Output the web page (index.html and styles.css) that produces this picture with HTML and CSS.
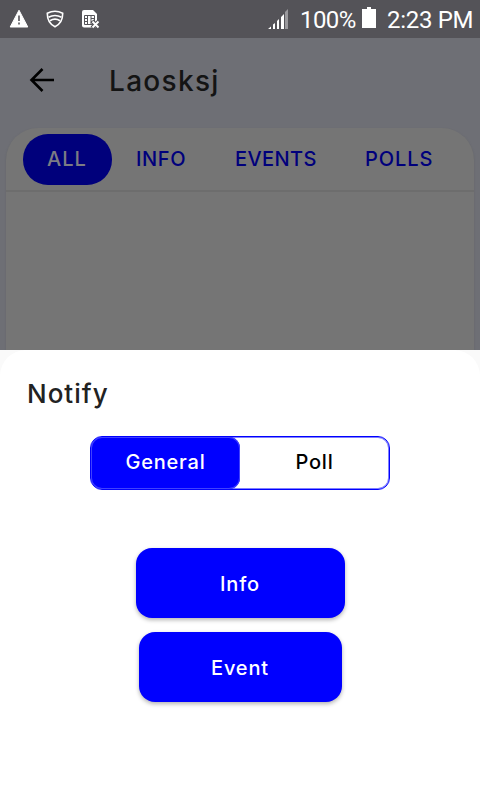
FILE: index.html
```html
<!DOCTYPE html>
<html lang="en">
<head>
<meta charset="utf-8">
<title>Laosksj</title>
<link rel="stylesheet" href="styles.css">
</head>
<body>
<div class="screen">
  <div class="status">
    <svg class="warn" width="20" height="19" viewBox="0 0 20 19"><path d="M10 1.2 18.8 18H1.2Z" fill="#fff" stroke="#fff" stroke-linejoin="round"/><path d="M10 6.500v5.500M10 13.500v2" stroke="#545358" stroke-width="1.600"/></svg>
    <svg class="shield" width="18" height="18" viewBox="0 0 18 18" fill="none" stroke="#fff" stroke-width="1.6"><path d="M1.3 3.2Q9-.6 16.7 3.2C16.8 10 13.8 14.500 9 16.800 4.200 14.500 1.200 10 1.300 3.200Z"/><path d="M2.500 7.200Q9 3.800 15.500 7.200M4 10.700Q9 7.400 14 10.700" stroke-width="1.700"/></svg>
    <svg class="sim" width="19" height="20" viewBox="0 0 19 20"><path d="M1 3Q1 1 3 1H12L16 5V18.500H3Q1 18.500 1 16.500Z" fill="#fff"/><path d="M3.500 6.500H13.500V15.500H3.500ZM6.500 7V15M10 7V15M4 9.500H7M10 9.500H13M4 12.500H7M10 12.500H13" fill="none" stroke="#545358"/><path d="M11 12 18 19M18 12 11 19" stroke="#545358" stroke-width="4"/><path d="M11.500 12.500 17.500 18.500M17.500 12.500 11.500 18.500" stroke="#fff" stroke-width="1.900"/></svg>
    <svg class="signal" width="21" height="20" viewBox="0 0 21 20"><path d="M0 20 3 17.500V20ZM5 15.500 7 14V20H5ZM9 12 11 10V20H9ZM13 8 16 5V20H13Z" fill="#fff"/><path d="M17 3 20 0V20H17Z" fill="#9a999d"/></svg>
    <span class="percent">100%</span>
    <svg class="battery" width="14" height="21" viewBox="0 0 14 21"><path d="M0 2H5V0H9V2H14V21H0Z" fill="#fff"/></svg>
    <span class="clock">2:23 PM</span>
  </div>
  <header class="appbar">
    <svg class="back" width="26" height="26" viewBox="0 0 26 26" fill="none" stroke="#000" stroke-width="2.600"><path d="M25 13H2.500M13.500 2 2.500 13 13.500 24"/></svg>
    <h1>Laosksj</h1>
  </header>
  <main class="card">
    <nav class="tabs">
      <span class="tab all active">ALL</span><span class="tab info">INFO</span><span class="tab events">EVENTS</span><span class="tab polls">POLLS</span>
    </nav>
  </main>
  <div class="sheet-wrap">
    <section class="sheet">
      <h2>Notify</h2>
      <div class="segments"><span class="segment selected">General</span><span class="segment poll">Poll</span></div>
      <div class="actions">
        <button class="action action-info">Info</button>
        <button class="action action-event">Event</button>
      </div>
    </section>
  </div>
</div>
</body>
</html>
```

FILE: styles.css
```css
* { box-sizing: border-box; }
body { margin: 0; font-family: Inter, "Noto Sans", sans-serif; font-weight: 500; }
.screen { width: 480px; height: 800px; overflow: hidden; display: flex; flex-direction: column; background: #6e6f75; }
.status { height: 38px; flex: none; background: #545358; color: #fff; display: flex; align-items: flex-start; font: 400 24px/38px Roboto, sans-serif; white-space: nowrap; }
.status svg { flex: none; }
.warn { margin: 9px 0 0 9px; }
.shield { margin: 10px 0 0 17px; }
.sim { margin: 9px 0 0 17px; }
.signal { margin: 9px 0 0 168px; }
.percent { width: 57px; margin-left: 11px; padding-top: 1px; letter-spacing: -.6px; }
.battery { margin: 7px 0 0 5px; }
.clock { margin-left: 11px; padding-top: 1px; letter-spacing: -.3px; }
.appbar { height: 90px; flex: none; display: flex; align-items: flex-start; }
.back { margin: 29px 0 0 29px; }
h1 { margin: 24px 0 0 54px; font-size: 28px; line-height: 38px; font-weight: 450; letter-spacing: 1.300px; color: #141414; }
.card { height: 222px; flex: none; margin: 0 6px; border-radius: 32px 32px 0 0; background: #757575; box-shadow: 0 1px 2px #626368; }
.tabs { height: 64px; display: flex; align-items: flex-start; padding: 6px 0 0 17px; border-bottom: 2px solid #6d6d6d; }
.tab { height: 51px; line-height: 50px; font-size: 20px; color: #00007c; letter-spacing: .4px; white-space: nowrap; }
.all { width: 89px; padding-right: 1px; text-align: center; border-radius: 25px; letter-spacing: 1px; }
.active { background: #00007b; color: #7c7c84; }
.info { width: 99px; margin-left: 24px; letter-spacing: .600px; }
.events { width: 130px; }
.polls { letter-spacing: .9px; }
.sheet-wrap { flex: 1; background: #fafafa; }
.sheet { height: 450px; background: #fff; border-radius: 26px 26px 0 0; padding: 26px 27px 0; }
h2 { margin: 0; font-size: 26px; line-height: 36px; font-weight: 450; letter-spacing: 1px; color: #222; }
.segments { width: 300px; height: 54px; margin: 24px auto 0; border: 1px solid #00f; border-radius: 12px; box-shadow: inset 0 0 0 1px #8080ff; display: flex; }
.segment { flex: 1; font-size: 20px; line-height: 51px; text-align: center; letter-spacing: .8px; color: #000; }
.selected { background: #00f; color: #fff; border-radius: 11px; box-shadow: inset 0 0 0 1px #4040ff; }
.actions { margin-top: 58px; display: flex; flex-direction: column; align-items: center; gap: 14px; }
.action { height: 70px; border: 0; border-radius: 16px; background: #00f; color: #fff; font: 500 20px Inter, sans-serif; letter-spacing: .850px; padding: 3px 0 1px; box-shadow: 0 2px 4px rgba(0,0,0,.3); }
.action-info { width: 209px; }
.action-event { width: 203px; }
```
